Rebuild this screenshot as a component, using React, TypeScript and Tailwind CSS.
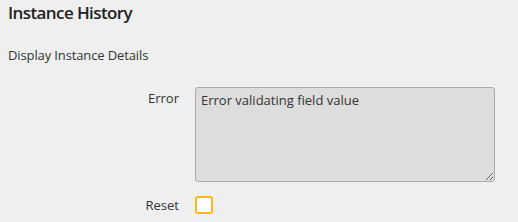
import { useState } from 'react';

export default function App() {
  const [reset, setReset] = useState(false);

  return (
    <div
      className="w-[518px] h-[222px] bg-[#efefef] text-[#333] overflow-hidden"
      style={{ fontFamily: '"Open Sans", sans-serif' }}
    >
      <h1 className="pl-2 pt-[1px] text-[17px] font-semibold tracking-[-0.6px] leading-[24px] text-[#222]">
        Instance History
      </h1>
      <p className="pl-2 mt-[21px] text-[13px] tracking-[-0.12px] leading-[18px] text-[#333]">
        Display Instance Details
      </p>

      <div className="mt-[23px] flex items-start">
        <label className="w-[179px] text-right text-[13px] leading-[18px] pt-[2px]">Error</label>
        <textarea
          readOnly
          defaultValue="Error validating field value"
          className="ml-4 w-[300px] h-[95px] rounded-[3px] border border-[#a9a9a9] bg-[#dddddd] px-[5px] py-[3px] text-[13px] leading-[18px] text-[#333] outline-none"
          style={{ fontFamily: '"Open Sans", sans-serif' }}
        />
      </div>

      <div className="mt-[14px] flex items-center">
        <span className="w-[179px] text-right text-[13px] leading-[18px]">Reset</span>
        <button
          type="button"
          onClick={() => setReset(!reset)}
          className="ml-4 w-[18px] h-[18px] rounded-[3px] border-2 border-[#fdb813] bg-white"
        />
      </div>
    </div>
  );
}
